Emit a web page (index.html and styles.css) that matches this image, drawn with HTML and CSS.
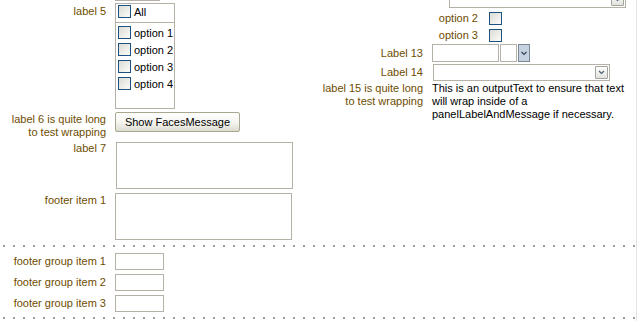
FILE: index.html
```html
<!DOCTYPE html>
<html lang="en">
<head>
    <meta charset="UTF-8">
    <title>Panel Form Layout</title>
    <link rel="stylesheet" href="styles.css">
</head>
<body>
    <div class="page">
        <div class="top">
            <!-- left column -->
            <div class="col">
                <div class="stub"></div>

                <div class="row row-5">
                    <label class="lbl">label 5</label>
                    <div class="listbox">
                        <div class="opt opt-all"><span class="cb"></span>All</div>
                        <div class="opts">
                            <div class="opt"><span class="cb"></span>option 1</div>
                            <div class="opt"><span class="cb"></span>option 2</div>
                            <div class="opt"><span class="cb"></span>option 3</div>
                            <div class="opt"><span class="cb"></span>option 4</div>
                        </div>
                    </div>
                </div>

                <div class="row row-6">
                    <label class="lbl">label 6 is quite long to test wrapping</label>
                    <button class="btn" type="button">Show FacesMessage</button>
                </div>

                <div class="row row-7">
                    <label class="lbl">label 7</label>
                    <textarea class="area area-7"></textarea>
                </div>

                <div class="row row-8">
                    <label class="lbl">footer item 1</label>
                    <textarea class="area"></textarea>
                </div>
            </div>

            <!-- right column -->
            <div class="col col-right">
                <div class="select select-top">
                    <span class="drop">
                        <svg width="13" height="13" viewBox="0 0 13 13"><polyline points="4,5 6.5,7.5 9,5" fill="none" stroke="#4d5d7a" stroke-width="1.2"/></svg>
                    </span>
                </div>

                <div class="check-row">
                    <label class="lbl">option 2</label>
                    <span class="cb"></span>
                </div>
                <div class="check-row">
                    <label class="lbl">option 3</label>
                    <span class="cb"></span>
                </div>

                <div class="rrow rrow-13">
                    <label class="lbl">Label 13</label>
                    <div class="combo">
                        <input class="inp inp-a" type="text">
                        <input class="inp inp-b" type="text">
                        <span class="combo-btn">
                            <svg width="10" height="16" viewBox="0 0 10 16"><polyline points="2.5,7 5,9.5 7.5,7" fill="none" stroke="#33445e" stroke-width="1.2"/></svg>
                        </span>
                    </div>
                </div>

                <div class="rrow rrow-14">
                    <label class="lbl">Label 14</label>
                    <div class="select">
                        <span class="drop">
                            <svg width="13" height="13" viewBox="0 0 13 13"><polyline points="4,5 6.5,7.5 9,5" fill="none" stroke="#4d5d7a" stroke-width="1.2"/></svg>
                        </span>
                    </div>
                </div>

                <div class="rrow rrow-15">
                    <label class="lbl">label 15 is quite long to test wrapping</label>
                    <p class="output">This is an outputText to ensure that text will wrap inside of a panelLabelAndMessage if necessary.</p>
                </div>
            </div>
        </div>

        <div class="dots dots-top"></div>

        <div class="footer">
            <div class="row">
                <label class="lbl">footer group item 1</label>
                <input class="inp small" type="text">
            </div>
            <div class="row">
                <label class="lbl">footer group item 2</label>
                <input class="inp small" type="text">
            </div>
            <div class="row">
                <label class="lbl">footer group item 3</label>
                <input class="inp small" type="text">
            </div>
        </div>

        <div class="dots"></div>
    </div>
</body>
</html>
```

FILE: styles.css
```css
body {
    margin: 0;
    font-family: 'Liberation Sans', Arial, sans-serif;
    font-size: 11px;
    color: #000;
    background: #fff;
}
.page {
    width: 636px;
    border-right: 1px solid #e4e4e4;
    padding-bottom: 2px;
}
.top {
    display: grid;
    grid-template-columns: 310px 1fr;
}
.lbl {
    color: #6e4c00;
    text-align: right;
    line-height: 13px;
}

/* left column */
.row {
    display: grid;
    grid-template-columns: 106px auto;
    column-gap: 9px;
    align-items: start;
}
.row .lbl {
    padding-left: 8px;
}
.stub {
    margin-left: 115px;
    width: 45px;
    border-bottom: 1px solid #b5b1a6;
}
.row-5 {
    margin-top: 2px;
}
.row-5 .lbl {
    padding-top: 2px;
}
.listbox {
    width: 60px;
    height: 106px;
    box-sizing: border-box;
    border: 1px solid #b5b1a6;
}
.opt {
    display: flex;
    align-items: center;
    gap: 3px;
    height: 17px;
    padding-left: 2px;
    white-space: nowrap;
}
.opt-all {
    height: 15px;
    padding-bottom: 3px;
    border-bottom: 1px solid #b5b1a6;
}
.opts {
    padding-top: 1px;
}
.cb {
    display: inline-block;
    width: 13px;
    height: 13px;
    box-sizing: border-box;
    border: 1px solid #1c5180;
    background: linear-gradient(135deg, #dcdcd5, #fbfbfa);
}
.row-6 {
    margin-top: 3px;
}
.row-6 .lbl {
    padding-top: 1px;
}
.btn {
    width: 125px;
    height: 20px;
    padding: 0;
    font-family: inherit;
    font-size: 11px;
    color: #000;
    border: 1px solid #a9a88f;
    border-radius: 2px;
    background: linear-gradient(#ffffff, #f4f4ef 55%, #dcdbd0);
}
.row-7 {
    margin-top: 3px;
}
.row-8 {
    margin-top: 4px;
}
.row-8 .lbl {
    padding-top: 1px;
}
.area {
    display: block;
    width: 177px;
    height: 47px;
    margin: 0;
    padding: 0;
    box-sizing: border-box;
    border: 1px solid #b5b1a6;
    resize: none;
}
.area-7 {
    margin-left: 1px;
}

/* right column */
.select {
    display: flex;
    justify-content: flex-end;
    width: 177px;
    height: 17px;
    padding: 1px;
    box-sizing: border-box;
    border: 1px solid #b5b1a6;
}
.select-top {
    margin: -9px 0 0 139px;
}
.drop {
    display: block;
    width: 13px;
    height: 13px;
    box-sizing: border-box;
    border: 1px solid #a3a3a0;
    border-radius: 1px;
    background: linear-gradient(#fdfdfd, #e3e3de);
}
.drop svg {
    display: block;
    margin: -1px;
}
.check-row {
    display: grid;
    grid-template-columns: 168px 13px;
    column-gap: 11px;
    align-items: center;
    height: 13px;
    margin-top: 4px;
}
.rrow {
    display: grid;
    grid-template-columns: 113px auto;
    column-gap: 9px;
    align-items: center;
    margin-top: 2px;
}
.rrow .lbl {
    padding-left: 8px;
}
.combo {
    display: flex;
    gap: 1px;
}
.inp {
    margin: 0;
    padding: 0;
    height: 18px;
    box-sizing: border-box;
    border: 1px solid #b5b1a6;
}
.inp-a {
    width: 67px;
}
.inp-b {
    width: 17px;
}
.combo-btn {
    display: block;
    width: 12px;
    height: 18px;
    box-sizing: border-box;
    border: 1px solid #7b8795;
    background: #c6d2df;
}
.combo-btn svg {
    display: block;
}
.rrow-14 .select {
    margin-left: 1px;
}
.rrow-15 {
    align-items: start;
    margin-top: 1px;
}
.output {
    margin: 0;
    width: 200px;
    line-height: 13px;
}

/* footer */
.dots {
    height: 2px;
    background-image: linear-gradient(to right, #9c9c9c 2px, transparent 2px);
    background-size: 10px 2px;
    background-position: 3px 0;
    background-repeat: repeat-x;
}
.dots-top {
    margin-top: 5px;
}
.footer {
    display: flex;
    flex-direction: column;
    gap: 4px;
    padding: 6px 0 5px;
}
.footer .row {
    align-items: center;
}
.small {
    width: 49px;
    height: 17px;
}
```
